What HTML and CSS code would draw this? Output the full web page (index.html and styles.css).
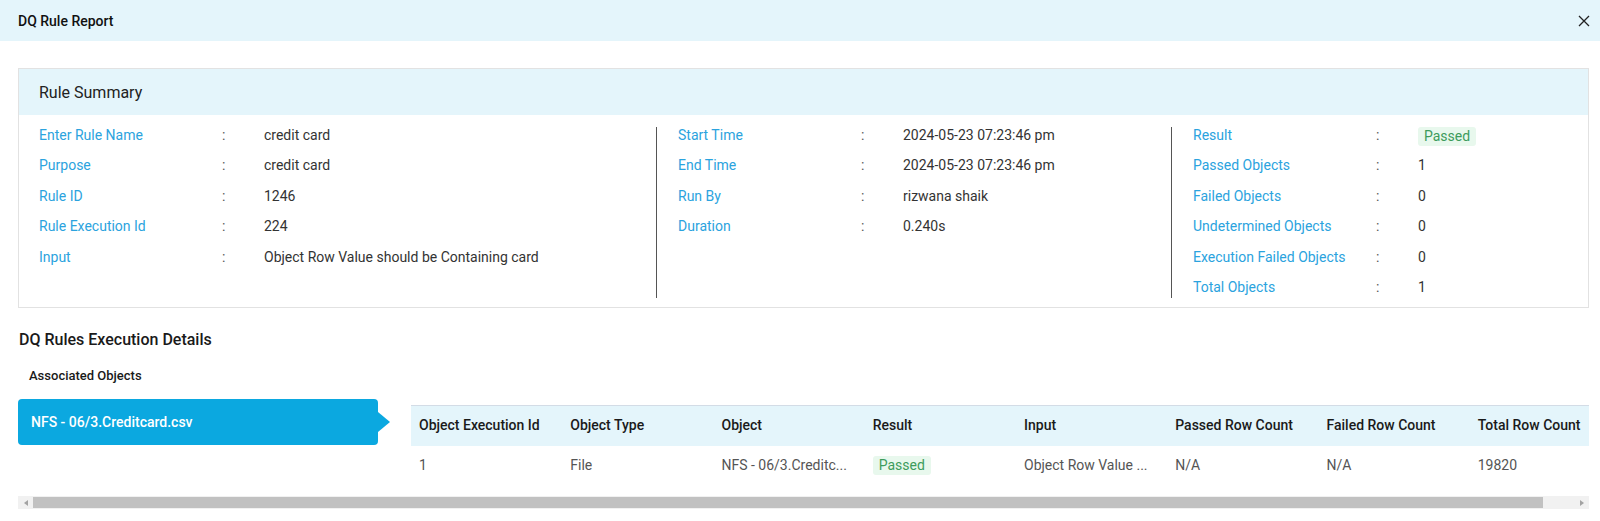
FILE: index.html
```html
<!DOCTYPE html>
<html lang="en">
<head>
<meta charset="utf-8">
<title>DQ Rule Report</title>
<link rel="stylesheet" href="styles.css">
</head>
<body>
<div class="modal">
  <header class="modal-head">
    <span class="modal-title">DQ Rule Report</span>
    <button class="close" aria-label="Close">
      <svg width="12" height="12" viewBox="0 0 12 12"><path d="M1 1L11 11M11 1L1 11" stroke="#222" stroke-width="1.3" fill="none"/></svg>
    </button>
  </header>
  <main class="modal-body">
    <section class="card">
      <div class="card-head">Rule Summary</div>
      <div class="card-body">
        <div class="col">
          <div class="row"><span class="lbl">Enter Rule Name</span><span class="colon">:</span><span class="val">credit card</span></div>
          <div class="row"><span class="lbl">Purpose</span><span class="colon">:</span><span class="val">credit card</span></div>
          <div class="row"><span class="lbl">Rule ID</span><span class="colon">:</span><span class="val">1246</span></div>
          <div class="row"><span class="lbl">Rule Execution Id</span><span class="colon">:</span><span class="val">224</span></div>
          <div class="row"><span class="lbl">Input</span><span class="colon">:</span><span class="val">Object Row Value should be Containing card</span></div>
        </div>
        <div class="col">
          <div class="row"><span class="lbl">Start Time</span><span class="colon">:</span><span class="val">2024-05-23 07:23:46 pm</span></div>
          <div class="row"><span class="lbl">End Time</span><span class="colon">:</span><span class="val">2024-05-23 07:23:46 pm</span></div>
          <div class="row"><span class="lbl">Run By</span><span class="colon">:</span><span class="val">rizwana shaik</span></div>
          <div class="row"><span class="lbl">Duration</span><span class="colon">:</span><span class="val">0.240s</span></div>
        </div>
        <div class="col">
          <div class="row"><span class="lbl">Result</span><span class="colon">:</span><span class="val"><span class="badge">Passed</span></span></div>
          <div class="row"><span class="lbl">Passed Objects</span><span class="colon">:</span><span class="val">1</span></div>
          <div class="row"><span class="lbl">Failed Objects</span><span class="colon">:</span><span class="val">0</span></div>
          <div class="row"><span class="lbl">Undetermined Objects</span><span class="colon">:</span><span class="val">0</span></div>
          <div class="row"><span class="lbl">Execution Failed Objects</span><span class="colon">:</span><span class="val">0</span></div>
          <div class="row"><span class="lbl">Total Objects</span><span class="colon">:</span><span class="val">1</span></div>
        </div>
      </div>
    </section>

    <h2 class="section-title">DQ Rules Execution Details</h2>
    <div class="sub-title">Associated Objects</div>

    <div class="exec-scroll">
      <div class="exec-inner">
        <div class="obj-item">
          <div class="obj-tab">NFS - 06/3.Creditcard.csv</div>
          <div class="obj-arrow"></div>
        </div>
        <table class="exec-table">
          <thead>
            <tr>
              <th>Object Execution Id</th>
              <th>Object Type</th>
              <th>Object</th>
              <th>Result</th>
              <th>Input</th>
              <th>Passed Row Count</th>
              <th>Failed Row Count</th>
              <th>Total Row Count</th>
            </tr>
          </thead>
          <tbody>
            <tr>
              <td>1</td>
              <td>File</td>
              <td title="NFS - 06/3.Creditcard.csv">NFS - 06/3.Creditc...</td>
              <td><span class="badge">Passed</span></td>
              <td title="Object Row Value should be Containing card">Object Row Value ...</td>
              <td>N/A</td>
              <td>N/A</td>
              <td>19820</td>
            </tr>
          </tbody>
        </table>
      </div>
    </div>
    <div class="hscroll" aria-hidden="true">
      <span class="hs-btn"><span class="tri-left"></span></span>
      <span class="hs-thumb"></span>
      <span class="hs-rest"></span>
      <span class="hs-btn"><span class="tri-right"></span></span>
    </div>
  </main>
</div>
</body>
</html>
```

FILE: styles.css
```css
* { box-sizing: border-box; }
html, body { margin: 0; padding: 0; }
body {
  font-family: Roboto, "Noto Sans", "Liberation Sans", Arial, sans-serif;
  background: #fff;
  color: #333;
  width: 1600px;
  height: 521px;
  overflow: hidden;
}

.modal-head {
  height: 41px;
  background: #e4f5fb;
  display: flex;
  align-items: center;
  justify-content: space-between;
  padding: 0 10px 0 18px;
}
.modal-title { font-size: 14px; font-weight: 500; color: #111; }
.close {
  width: 12px; height: 12px;
  padding: 0; border: 0; background: none;
  display: flex; cursor: pointer;
}

.modal-body { padding: 27px 11px 0 18px; }

.card { border: 1px solid #e2e2e2; }
.card-head {
  height: 46px;
  background: #e4f5fb;
  display: flex;
  align-items: center;
  padding-left: 20px;
  font-size: 16px;
  color: #222;
}
.card-body {
  display: grid;
  grid-template-columns: 637px 515px 1fr;
  padding: 12px 0 9px;
}
.col {
  display: flex;
  flex-direction: column;
  gap: 14.4px;
  padding: 0 0 3px 20px;
}
.col + .col { border-left: 1px solid #555; padding-left: 21px; }
.row {
  display: grid;
  grid-template-columns: 183px 42px 1fr;
  height: 16px;
  font-size: 14px;
  line-height: 16px;
}
.lbl { color: #2ba3de; white-space: nowrap; }
.colon { color: #555; }
.val { color: #333; white-space: nowrap; align-self: start; }

.badge {
  display: inline-block;
  background: #e8f8ed;
  color: #3d9c5c;
  padding: 1px 6px;
  border-radius: 3px;
  line-height: 17px;
  font-size: 14px;
}

.section-title {
  margin: 22px 0 0 1px;
  font-size: 16px;
  font-weight: 500;
  line-height: 20px;
  color: #1a1a1a;
}
.sub-title {
  margin: 17px 0 0 11px;
  font-size: 13px;
  font-weight: 500;
  line-height: 18px;
  color: #1a1a1a;
}

.exec-scroll {
  margin-top: 14px;
  overflow: hidden;
}
.exec-inner {
  display: flex;
  align-items: flex-start;
  width: max-content;
}
.obj-item { display: flex; align-items: center; }
.obj-tab {
  width: 360px;
  height: 46px;
  background: #0ba8e0;
  border-radius: 4px;
  color: #fff;
  font-size: 14px;
  font-weight: 500;
  display: flex;
  align-items: center;
  padding-left: 13px;
}
.obj-arrow {
  width: 0; height: 0;
  border-top: 10px solid transparent;
  border-bottom: 10px solid transparent;
  border-left: 12px solid #0ba8e0;
}

.exec-table {
  margin: 6px 0 0 21px;
  width: 1210px;
  border-collapse: collapse;
  table-layout: fixed;
  font-size: 14px;
}
.exec-table th {
  height: 41px;
  background: #e4f5fb;
  border-top: 1px solid #d3dce6;
  text-align: left;
  font-weight: 500;
  color: #1a1a1a;
  padding: 0 8px 3px;
  white-space: nowrap;
}
.exec-table td {
  height: 38px;
  padding: 0 8px;
  color: #555;
  white-space: nowrap;
}

.hscroll {
  display: flex;
  height: 13px;
  margin-top: 12px;
  background: #f1f1f1;
}
.hs-btn {
  flex: 0 0 15px;
  display: flex;
  align-items: center;
  justify-content: center;
}
.tri-left, .tri-right {
  width: 0; height: 0;
  border-top: 3.5px solid transparent;
  border-bottom: 3.5px solid transparent;
}
.tri-left { border-right: 4px solid #a3a3a3; }
.tri-right { border-left: 4px solid #a3a3a3; }
.hs-thumb {
  flex: 0 0 1510px;
  margin: 1px 0;
  background: #c1c1c1;
}
.hs-rest { flex: 1; }
```
